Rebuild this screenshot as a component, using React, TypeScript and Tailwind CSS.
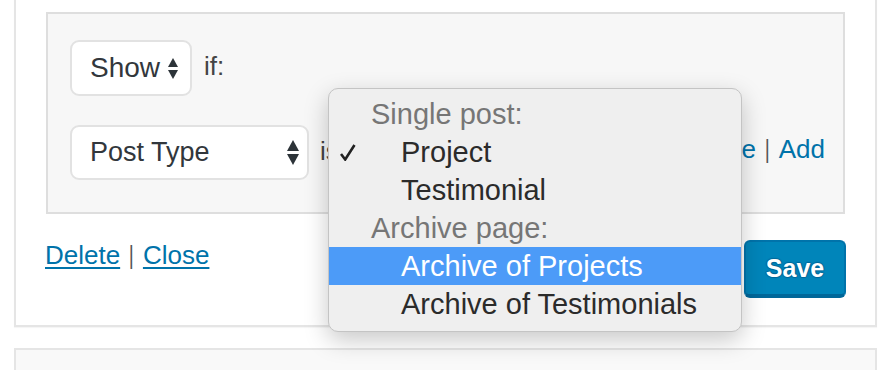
import React from "react";

function Arrows({ w, h, gap }: { w: number; h: number; gap: number }) {
  const th = (h - gap) / 2;
  return (
    <svg width={w} height={h} viewBox={`0 0 ${w} ${h}`} className="shrink-0">
      <polygon points={`0,${th} ${w / 2},0 ${w},${th}`} fill="#2c3338" />
      <polygon points={`0,${th + gap} ${w},${th + gap} ${w / 2},${h}`} fill="#2c3338" />
    </svg>
  );
}

export default function App() {
  return (
    <div
      className="w-[894px] h-[370px] overflow-hidden bg-white relative"
      style={{ fontFamily: '"Liberation Sans", Arial, sans-serif' }}
    >
      {/* Card 1 */}
      <div className="ml-[14px] w-[863px] -mt-[20px] h-[347px] border-2 border-[#e5e5e5] bg-white shadow-[0_1px_1px_rgba(0,0,0,0.04)] px-[30px] pt-[30px]">
        <div className="h-[202px] border-2 border-[#dedede] bg-[#f7f7f7] pl-[22px] pr-[18px] pt-[26px]">
          {/* Row 1 */}
          <div className="flex items-center h-[56px]">
            <div className="w-[122px] h-[56px] rounded-[9px] border-2 border-[#e2e2e2] bg-white flex items-center pl-[18px] pr-[12px] justify-between">
              <span className="text-[28px] text-[#32373c] leading-none">Show</span>
              <Arrows w={10} h={21} gap={3} />
            </div>
            <span className="ml-[12px] text-[26px] text-[#444] leading-none -mt-[4px]">if:</span>
          </div>
          {/* Row 2 */}
          <div className="flex items-center h-[55px] mt-[29px]">
            <div className="w-[239px] h-[55px] rounded-[9px] border-2 border-[#e2e2e2] bg-white flex items-center pl-[18px] pr-[8px] justify-between">
              <span className="text-[27px] text-[#32373c] leading-none">Post Type</span>
              <Arrows w={12} h={25} gap={3} />
            </div>
            <span className="ml-[11px] text-[26px] text-[#444] leading-none -mt-[4px]">is</span>
            <div className="ml-auto flex items-center text-[26px] leading-none -mt-[8px]">
              <span className="text-[#0073aa]">Remove</span>
              <span className="text-[#555] mx-[8px] scale-x-75">|</span>
              <span className="text-[#0073aa]">Add</span>
            </div>
          </div>
        </div>
        {/* Footer */}
        <div className="flex justify-between items-start mt-[26px]">
          <div className="text-[26px] leading-[30px] -ml-[1px]">
            <span className="text-[#0073aa] underline underline-offset-[3px] decoration-[2px]">Delete</span>
            <span className="text-[#555] mx-[8px] inline-block scale-x-75">|</span>
            <span className="text-[#0073aa] underline underline-offset-[3px] decoration-[2px]">Close</span>
          </div>
          <div className="w-[102px] h-[58px] rounded-[6px] bg-[#0085ba] border-2 border-[#0073aa] border-b-[4px] border-b-[#006799] flex items-center justify-center mr-[-1px]">
            <span
              className="text-white text-[25px] font-bold leading-none"
              style={{ textShadow: "0 -1px 1px #006799, 1px 0 1px #006799, 0 1px 1px #006799, -1px 0 1px #006799" }}
            >
              Save
            </span>
          </div>
        </div>
      </div>

      {/* Card 2 */}
      <div className="ml-[14px] w-[863px] mt-[21px] h-[60px] border-2 border-[#e5e5e5] bg-[#f9f9f9]" />

      {/* Dropdown menu */}
      <div className="absolute left-[328px] top-[88px] w-[414px] h-[244px] rounded-[10px] bg-[#efefef] border border-[#c4c4c4] shadow-[0_8px_24px_rgba(0,0,0,0.22)] pt-[6px] overflow-hidden text-[29px] leading-none">
        <div className="h-[38px] flex items-center pl-[42px] text-[#767676]">Single post:</div>
        <div className="h-[38px] flex items-center text-[#2b2b2b] relative">
          <svg width="16" height="17" viewBox="0 0 16 17" className="absolute left-[11px] top-[11px]">
            <path d="M1 10 L5.2 15.5 L14.5 1" fill="none" stroke="#222" strokeWidth="2.6" strokeLinejoin="miter" strokeLinecap="butt" />
          </svg>
          <span className="pl-[72px]">Project</span>
        </div>
        <div className="h-[38px] flex items-center pl-[72px] text-[#2b2b2b]">Testimonial</div>
        <div className="h-[38px] flex items-center pl-[42px] text-[#767676]">Archive page:</div>
        <div className="h-[38px] flex items-center pl-[72px] text-white bg-[#4c9bf8]">Archive of Projects</div>
        <div className="h-[38px] flex items-center pl-[72px] text-[#2b2b2b]">Archive of Testimonials</div>
      </div>
    </div>
  );
}
